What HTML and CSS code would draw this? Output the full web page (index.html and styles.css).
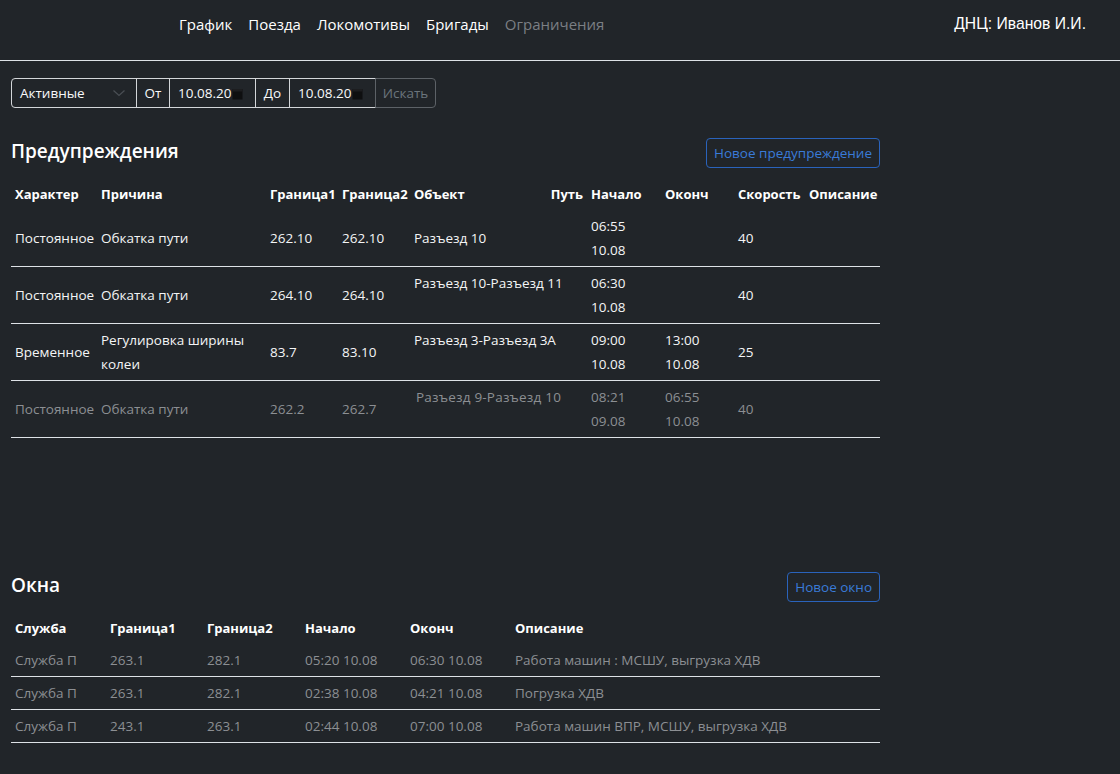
FILE: index.html
```html
<!DOCTYPE html>
<html lang="ru">
<head>
<meta charset="utf-8">
<title>Ограничения</title>
<link rel="stylesheet" href="styles.css">
</head>
<body>
<header class="navbar">
  <nav class="nav-links">
    <a class="nav-link">График</a>
    <a class="nav-link">Поезда</a>
    <a class="nav-link">Локомотивы</a>
    <a class="nav-link">Бригады</a>
    <a class="nav-link active">Ограничения</a>
  </nav>
  <div class="user">ДНЦ: Иванов И.И.</div>
</header>

<main class="page">
  <div class="filters">
    <div class="fld select">
      <span>Активные</span>
      <svg class="chev" width="14" height="10" viewBox="0 0 14 10"><polyline points="1.5,2.5 7,7.5 12.5,2.5" fill="none" stroke="#4a4f54" stroke-width="1.2"/></svg>
    </div>
    <div class="fld label lbl-from">От</div>
    <div class="fld date"><span class="dtxt">10.08.20</span><svg class="cal" width="11" height="12" viewBox="0 0 11 12"><rect x="0.5" y="1" width="10" height="10.5" fill="#0e0f10"/><rect x="0.5" y="1" width="10" height="2.5" fill="#1c1d1f"/></svg></div>
    <div class="fld label lbl-to">До</div>
    <div class="fld date"><span class="dtxt">10.08.20</span><svg class="cal" width="11" height="12" viewBox="0 0 11 12"><rect x="0.5" y="1" width="10" height="10.5" fill="#0e0f10"/><rect x="0.5" y="1" width="10" height="2.5" fill="#1c1d1f"/></svg></div>
    <div class="fld btn-search">Искать</div>
  </div>

  <section class="block">
    <div class="block-head">
      <h2>Предупреждения</h2>
      <button class="btn-outline">Новое предупреждение</button>
    </div>
    <table class="tbl warn">
      <colgroup>
        <col class="w86"><col class="w169"><col class="w72"><col class="w72"><col class="w177"><col class="w74"><col class="w73"><col class="w71"><col class="w75">
      </colgroup>
      <thead>
        <tr>
          <th>Характер</th><th>Причина</th><th>Граница1</th><th>Граница2</th>
          <th><div class="obj-head"><span>Объект</span><span>Путь</span></div></th>
          <th>Начало</th><th>Оконч</th><th>Скорость</th><th>Описание</th>
        </tr>
      </thead>
      <tbody>
        <tr>
          <td>Постоянное</td><td>Обкатка пути</td><td>262.10</td><td>262.10</td>
          <td>Разъезд 10</td><td>06:55<br>10.08</td><td></td><td>40</td><td></td>
        </tr>
        <tr>
          <td>Постоянное</td><td>Обкатка пути</td><td>264.10</td><td>264.10</td>
          <td class="top">Разъезд 10-Разъезд 11</td><td>06:30<br>10.08</td><td></td><td>40</td><td></td>
        </tr>
        <tr>
          <td>Временное</td><td>Регулировка ширины колеи</td><td>83.7</td><td>83.10</td>
          <td class="top">Разъезд 3-Разъезд 3А</td><td>09:00<br>10.08</td><td>13:00<br>10.08</td><td>25</td><td></td>
        </tr>
        <tr class="muted">
          <td>Постоянное</td><td>Обкатка пути</td><td>262.2</td><td>262.7</td>
          <td class="top spaced">Разъезд 9-Разъезд 10</td><td>08:21<br>09.08</td><td>06:55<br>10.08</td><td>40</td><td></td>
        </tr>
      </tbody>
    </table>
  </section>

  <section class="block block-windows">
    <div class="block-head">
      <h2>Окна</h2>
      <button class="btn-outline">Новое окно</button>
    </div>
    <table class="tbl windows">
      <colgroup>
        <col class="w95"><col class="w97"><col class="w98"><col class="w105"><col class="w105"><col class="w369">
      </colgroup>
      <thead>
        <tr><th>Служба</th><th>Граница1</th><th>Граница2</th><th>Начало</th><th>Оконч</th><th>Описание</th></tr>
      </thead>
      <tbody>
        <tr class="muted"><td>Служба П</td><td>263.1</td><td>282.1</td><td>05:20 10.08</td><td>06:30 10.08</td><td>Работа машин : МСШУ, выгрузка ХДВ</td></tr>
        <tr class="muted"><td>Служба П</td><td>263.1</td><td>282.1</td><td>02:38 10.08</td><td>04:21 10.08</td><td>Погрузка ХДВ</td></tr>
        <tr class="muted"><td>Служба П</td><td>243.1</td><td>263.1</td><td>02:44 10.08</td><td>07:00 10.08</td><td>Работа машин ВПР, МСШУ, выгрузка ХДВ</td></tr>
      </tbody>
    </table>
  </section>
</main>
</body>
</html>
```

FILE: styles.css
```css
* { box-sizing: border-box; }

body {
  margin: 0;
  background: #212529;
  color: #f4f5f6;
  font-family: "Open Sans", "Noto Sans", sans-serif;
  font-size: 13.5px;
}

.navbar {
  height: 61px;
  border-bottom: 1px solid #dee2e6;
  display: flex;
  justify-content: space-between;
  align-items: flex-start;
  padding: 12px 34px 0 171px;
}

.nav-links {
  display: flex;
}

.nav-link {
  padding: 0 8px;
  font-size: 15px;
  line-height: 24px;
  color: #ffffff;
}

.nav-link.active {
  color: #7b7f84;
}

.user {
  font-family: "Liberation Sans", Arial, sans-serif;
  font-size: 15.7px;
  line-height: 24px;
  color: #ffffff;
}

.page {
  padding: 17px 0 0 11px;
}

.filters {
  display: flex;
  height: 30px;
}

.fld {
  display: flex;
  align-items: center;
  border: 1px solid #d3d6d9;
  margin-left: -1px;
  font-size: 13.5px;
  color: #f8f9fa;
}

.select {
  margin-left: 0;
  width: 126px;
  padding-left: 8px;
  border-radius: 4px 0 0 4px;
  justify-content: space-between;
  padding-right: 10px;
}

.label {
  justify-content: center;
}

.lbl-from { width: 34px; }
.lbl-to { width: 35px; }

.date {
  width: 87px;
  padding-left: 8px;
  gap: 1px;
}

.cal { margin-top: 1px; }

.btn-search {
  width: 61px;
  justify-content: center;
  color: #6c757d;
  border-color: #5d6267;
  border-radius: 0 4px 4px 0;
}

.block {
  width: 869px;
  margin-top: 29px;
}

.block-windows {
  margin-top: 133px;
}

.block-head {
  display: flex;
  justify-content: space-between;
  align-items: center;
  height: 31px;
}

.block-head h2 {
  margin: 0 0 4px;
  font-size: 19px;
  line-height: 26px;
  font-weight: 600;
  color: #ffffff;
}

.btn-outline {
  font-family: inherit;
  font-size: 13.5px;
  height: 30px;
  padding: 0 7px;
  background: transparent;
  color: #3a7bd8;
  border: 1px solid #2a63bb;
  border-radius: 4px;
}

.tbl {
  width: 869px;
  margin-top: 10px;
  border-collapse: collapse;
  table-layout: fixed;
}

.tbl th {
  text-align: left;
  font-weight: 700;
  font-size: 13px;
  color: #ffffff;
  padding: 4px;
  line-height: 24px;
  white-space: nowrap;
}

.tbl td {
  padding: 4px;
  line-height: 24px;
  vertical-align: middle;
}

.tbl tbody tr {
  border-bottom: 1px solid #dee2e6;
}

.tbl td.top {
  vertical-align: top;
}

.tbl td.spaced {
  padding-left: 6px;
  letter-spacing: 0.2px;
}

.tbl tr.muted td {
  color: #8c8f93;
}

.obj-head {
  display: flex;
  justify-content: space-between;
}

.w71 { width: 71px; }
.w72 { width: 72px; }
.w73 { width: 73px; }
.w74 { width: 74px; }
.w75 { width: 75px; }
.w86 { width: 86px; }
.w95 { width: 95px; }
.w97 { width: 97px; }
.w98 { width: 98px; }
.w105 { width: 105px; }
.w169 { width: 169px; }
.w177 { width: 177px; }
.w369 { width: 369px; }
```
